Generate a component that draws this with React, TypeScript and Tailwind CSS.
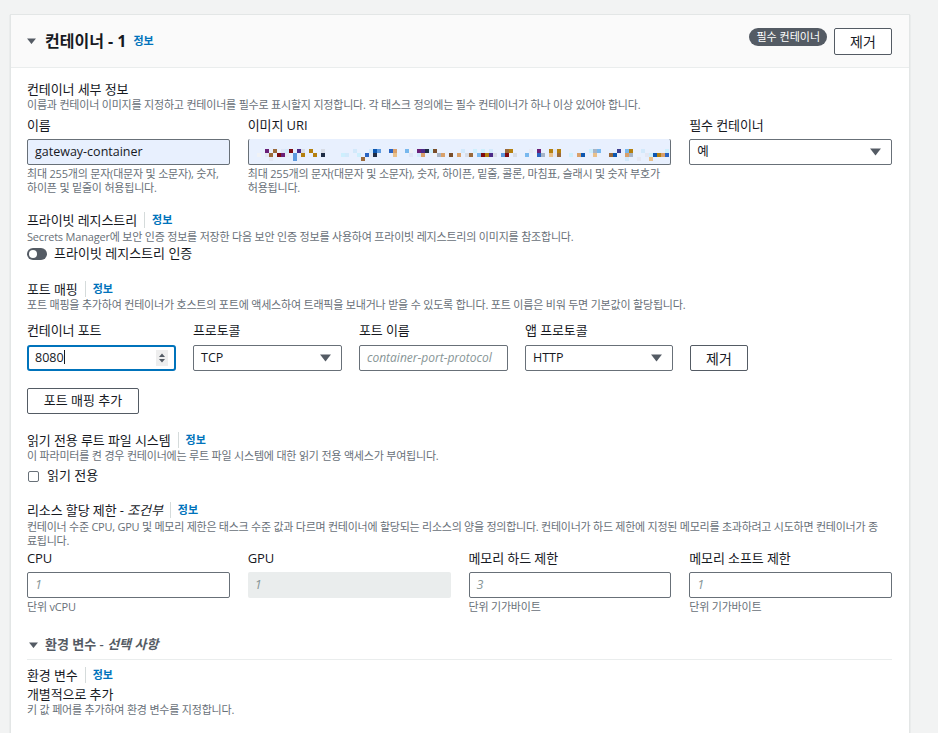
import React from "react";

const FONT = { fontFamily: '"Open Sans", "Noto Sans CJK KR", sans-serif' };

function Info({ sep = true }: { sep?: boolean }) {
  return (
    <span className="inline-flex items-center">
      {sep && <span className="mx-[7px] inline-block h-[16px] w-px bg-[#d5dbdb]" />}
      <span className="text-[11px] font-bold text-[#0073bb]">정보</span>
    </span>
  );
}

function Caret({ className = "", w = 11 }: { className?: string; w?: number }) {
  return (
    <svg width={w} height={w * 0.72} viewBox="0 0 11 8" className={className}>
      <path d="M0 0.5 H11 L5.5 7.5 Z" fill="#545b64" />
    </svg>
  );
}

function Select({ value }: { value: string }) {
  return (
    <div className="flex h-[26px] items-center justify-between rounded-[2px] border border-[#687078] bg-white pl-[7px] pr-[10px] text-[12.5px] text-[#16191f]">
      <span>{value}</span>
      <Caret />
    </div>
  );
}

function Pixels() {
  const palette = [
    "#3d3f92", "#6a1f78", "#e4e7f3", "#78b8ee", "#7e0b12", "#d9a06a", "#1f2c44",
    "#cdeffd", "#0c56b0", "#b5800f", "#e9c08a", "#5e9be0", "#a7b4c6", "#4b2a88",
    "#e2e8d8", "#9b6a3a", "#a8e7f9", "#d8dde6", "#2a64c2", "#f0f2f6", "#7a4d29",
    "#dfe6f5", "#e6eaf4", "#d2e9fb",
  ];
  let seed = 17;
  const rnd = () => {
    seed = (seed * 1103515245 + 12345) % 2147483648;
    return seed / 2147483648;
  };
  const rects: React.ReactNode[] = [];
  const cols = 103;
  for (let r = 0; r < 3; r++) {
    for (let c = 0; c < cols; c++) {
      const p = r === 0 ? 0.45 : r === 1 ? 0.55 : 0.05;
      if (rnd() < p) {
        const color = palette[Math.floor(rnd() * palette.length)];
        rects.push(<rect key={r + "-" + c} x={c * 4} y={r * 4} width="4" height="4" fill={color} />);
      }
    }
  }
  return (
    <svg width="412" height="12" viewBox="0 0 412 12">
      {rects}
    </svg>
  );
}

function Label({ children }: { children: React.ReactNode }) {
  return (
    <div className="whitespace-nowrap text-[13px] leading-[18px] tracking-[-0.1px] text-[#16191f]">{children}</div>
  );
}

function Desc({ children, className = "" }: { children: React.ReactNode; className?: string }) {
  return (
    <div className={"whitespace-nowrap text-[11px] leading-[14px] tracking-[-0.2px] text-[#687078] " + className}>
      {children}
    </div>
  );
}

function TextInput({ placeholder, disabled }: { placeholder: string; disabled?: boolean }) {
  return (
    <div
      className={
        "flex h-[26px] items-center overflow-hidden whitespace-nowrap rounded-[2px] px-[7px] text-[12.5px] italic " +
        (disabled ? "bg-[#eaeded] text-[#879596]" : "border border-[#687078] bg-white text-[#879596]")
      }
    >
      {placeholder}
    </div>
  );
}

export default function App() {
  return (
    <div className="min-h-[733px] bg-[#f2f3f3] pl-[10px] pr-[28px] pt-[14px]" style={FONT}>
      <div className="w-[900px] border border-[#e3e6e6] bg-white shadow-[0_1px_1px_rgba(0,28,36,0.2)]">
        {/* header */}
        <div className="flex h-[53px] items-center justify-between border-b border-[#eaeded] bg-[#fafafa] pl-[16px] pr-[17px]">
          <div className="flex items-center">
            <Caret className="mr-[9px]" w={9} />
            <span className="text-[16px] font-bold text-[#16191f]">컨테이너 - 1</span>
            <span className="ml-[7px] text-[11px] font-bold text-[#0073bb]">정보</span>
          </div>
          <div className="flex items-center">
            <span className="mr-[7px] mt-[-8px] flex h-[18px] items-center whitespace-nowrap rounded-full bg-[#545b64] px-[7px] text-[11px] text-white">
              필수 컨테이너
            </span>
            <button className="h-[27px] w-[58px] rounded-[2px] border border-[#545b64] bg-white text-[14px] text-[#16191f]">
              제거
            </button>
          </div>
        </div>

        {/* body */}
        <div className="pb-[20px] pl-[16px] pr-[17px] pt-[12px]">
          <Label>컨테이너 세부 정보</Label>
          <Desc>이름과 컨테이너 이미지를 지정하고 컨테이너를 필수로 표시할지 지정합니다. 각 태스크 정의에는 필수 컨테이너가 하나 이상 있어야 합니다.</Desc>

          <div className="mt-[4px] grid grid-cols-4 gap-x-[18px]">
            <div>
              <Label>이름</Label>
              <div className="mt-[5px] flex h-[26px] items-center rounded-[2px] border border-[#687078] bg-[#e8f0fe] px-[7px] text-[12.5px] text-[#16191f]">
                gateway-container
              </div>
              <div className="mt-[2px] whitespace-nowrap text-[11px] leading-[14px] tracking-[-0.2px] text-[#687078]">
                최대 255개의 문자(대문자 및 소문자), 숫자,
                <br />
                하이픈 및 밑줄이 허용됩니다.
              </div>
            </div>
            <div className="col-span-2">
              <Label>이미지 URI</Label>
              <div className="mt-[5px] flex h-[26px] items-center overflow-hidden rounded-[2px] border-b border-l border-r border-[#687078] bg-[#e8f0fe] pl-[8px]">
                <div className="mt-[6px]">
                  <Pixels />
                </div>
              </div>
              <div className="mt-[2px] whitespace-nowrap text-[11px] leading-[14px] tracking-[-0.2px] text-[#687078]">
                최대 255개의 문자(대문자 및 소문자), 숫자, 하이픈, 밑줄, 콜론, 마침표, 슬래시 및 숫자 부호가
                <br />
                허용됩니다.
              </div>
            </div>
            <div>
              <Label>필수 컨테이너</Label>
              <div className="mt-[5px]">
                <Select value="예" />
              </div>
            </div>
          </div>

          {/* private registry */}
          <div className="mt-[16px] flex items-center">
            <Label>프라이빗 레지스트리</Label>
            <Info />
          </div>
          <Desc className="mt-[1px]">Secrets Manager에 보안 인증 정보를 저장한 다음 보안 인증 정보를 사용하여 프라이빗 레지스트리의 이미지를 참조합니다.</Desc>
          <div className="flex h-[20px] items-center">
            <span className="relative inline-block h-[12px] w-[20px] rounded-full bg-[#545b64]">
              <span className="absolute left-[2px] top-[2px] h-[8px] w-[8px] rounded-full bg-white" />
            </span>
            <span className="ml-[7px] whitespace-nowrap text-[13px] text-[#16191f]">프라이빗 레지스트리 인증</span>
          </div>

          {/* port mapping */}
          <div className="mt-[16px] flex items-center">
            <Label>포트 매핑</Label>
            <Info />
          </div>
          <Desc>포트 매핑을 추가하여 컨테이너가 호스트의 포트에 액세스하여 트래픽을 보내거나 받을 수 있도록 합니다. 포트 이름은 비워 두면 기본값이 할당됩니다.</Desc>
          <div className="mt-[9px] grid grid-cols-[149px_149px_149px_148px_58px] gap-x-[17px]">
            <Label>컨테이너 포트</Label>
            <Label>프로토콜</Label>
            <Label>포트 이름</Label>
            <Label>앱 프로토콜</Label>
            <div />
            <div className="mt-[6px] flex h-[26px] items-center justify-between rounded-[3px] border-2 border-[#0073bb] bg-white pl-[6px] pr-[6px] text-[12.5px] text-[#16191f]">
              <span>
                8080<span className="inline-block h-[14px] w-px translate-y-[2px] bg-[#16191f]" />
              </span>
              <span className="flex h-[16px] w-[12px] flex-col items-center justify-center bg-[#eeeeee]">
                <svg width="6" height="10" viewBox="0 0 6 10">
                  <path d="M0 4 L3 0.5 L6 4 Z M0 6 L3 9.5 L6 6 Z" fill="#545b64" />
                </svg>
              </span>
            </div>
            <div className="mt-[6px]">
              <Select value="TCP" />
            </div>
            <div className="mt-[6px] flex h-[26px] items-center overflow-hidden whitespace-nowrap rounded-[2px] border border-[#687078] bg-white px-[7px] text-[12px] italic text-[#879596]">
              container-port-protocol
            </div>
            <div className="mt-[6px]">
              <Select value="HTTP" />
            </div>
            <button className="mt-[6px] h-[26px] rounded-[2px] border border-[#545b64] bg-white text-[14px] text-[#16191f]">
              제거
            </button>
          </div>
          <button className="mt-[17px] h-[26px] w-[112px] rounded-[2px] border border-[#545b64] bg-white text-[13px] text-[#16191f]">
            포트 매핑 추가
          </button>

          {/* read-only */}
          <div className="mt-[17px] flex items-center">
            <Label>읽기 전용 루트 파일 시스템</Label>
            <Info />
          </div>
          <Desc>이 파라미터를 켠 경우 컨테이너에는 루트 파일 시스템에 대한 읽기 전용 액세스가 부여됩니다.</Desc>
          <div className="mt-[3px] flex h-[20px] items-center">
            <span className="ml-[1px] inline-block h-[11px] w-[11px] rounded-[2px] border border-[#687078] bg-white" />
            <span className="ml-[8px] text-[13px] text-[#16191f]">읽기 전용</span>
          </div>

          {/* resources */}
          <div className="mt-[15px] flex items-center">
            <Label>
              리소스 할당 제한 - <i>조건부</i>
            </Label>
            <Info />
          </div>
          <div className="mt-[1px] whitespace-nowrap text-[11px] leading-[14px] tracking-[-0.25px] text-[#687078]">
            컨테이너 수준 CPU, GPU 및 메모리 제한은 태스크 수준 값과 다르며 컨테이너에 할당되는 리소스의 양을 정의합니다. 컨테이너가 하드 제한에 지정된 메모리를 초과하려고 시도하면 컨테이너가 종
            <br />
            료됩니다.
          </div>
          <div className="mt-[1px] grid grid-cols-4 gap-x-[18px]">
            <Label>CPU</Label>
            <Label>GPU</Label>
            <Label>메모리 하드 제한</Label>
            <Label>메모리 소프트 제한</Label>
            <div className="mt-[5px]"><TextInput placeholder="1" /></div>
            <div className="mt-[5px]"><TextInput placeholder="1" disabled /></div>
            <div className="mt-[5px]"><TextInput placeholder="3" /></div>
            <div className="mt-[5px]"><TextInput placeholder="1" /></div>
            <Desc className="mt-[2px]">단위 vCPU</Desc>
            <div />
            <Desc className="mt-[2px]">단위 기가바이트</Desc>
            <Desc className="mt-[2px]">단위 기가바이트</Desc>
          </div>

          {/* env */}
          <div className="mt-[21px] flex h-[20px] items-center pl-[2px]">
            <Caret className="mr-[7px]" w={9} />
            <span className="whitespace-nowrap text-[13px] font-semibold text-[#545b64]">
              환경 변수 - <i>선택 사항</i>
            </span>
          </div>
          <div className="mt-[4px] border-t border-[#eaeded]" />
          <div className="mt-[6px] flex items-center">
            <Label>환경 변수</Label>
            <Info />
          </div>
          <div className="mt-[1px]">
            <Label>개별적으로 추가</Label>
          </div>
          <Desc>키 값 페어를 추가하여 환경 변수를 지정합니다.</Desc>
        </div>
      </div>
    </div>
  );
}
